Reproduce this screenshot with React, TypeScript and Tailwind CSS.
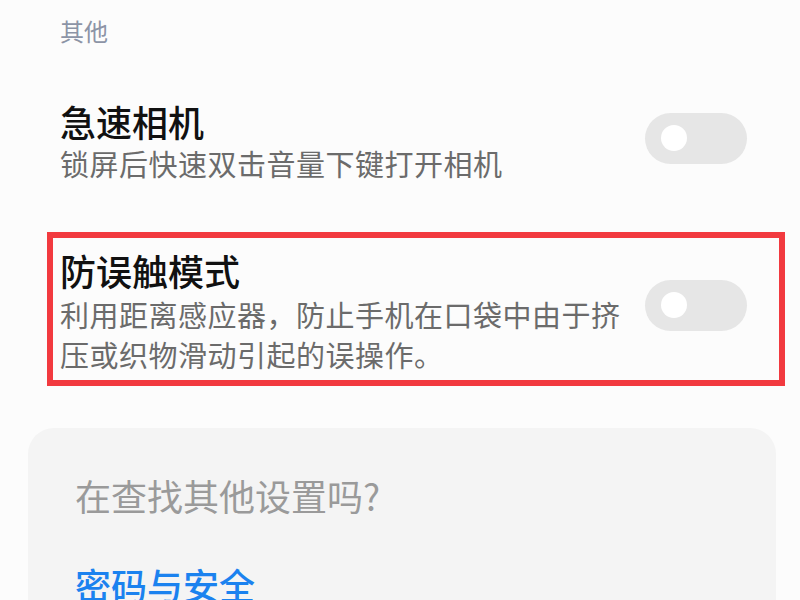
import React from 'react';

const Toggle: React.FC<{ className?: string }> = ({ className = '' }) => (
  <div className={`w-[102px] h-[51px] shrink-0 rounded-full bg-[#e6e6e6] flex items-center pl-[16px] ${className}`}>
    <div className="w-[26px] h-[26px] rounded-full bg-white" />
  </div>
);

const App: React.FC = () => {
  return (
    <div className="w-[800px] h-[600px] overflow-hidden bg-[#fcfcfc] font-['Noto_Sans_CJK_SC',sans-serif]">
      <div className="pl-[60px] pt-[15px] text-[24px] leading-[32px] text-[#8c94a6]">其他</div>

      <div className="mt-[52px] flex items-center justify-between pl-[60px] pr-[53px]">
        <div>
          <div className="text-[36px] leading-[44px] font-medium text-[#111]">急速相机</div>
          <div className="text-[29px] leading-[40px] tracking-[0.5px] text-[#6b6b6b]">锁屏后快速双击音量下键打开相机</div>
        </div>
        <Toggle className="mb-[6px]" />
      </div>

      <div className="mt-[49px] mx-[47px] w-[738px] border-[6px] border-[#f23a3f] flex items-center justify-between pl-[7px] pr-[32px] pt-[10px] pb-[6px]">
        <div className="w-[570px]">
          <div className="text-[36px] leading-[44px] font-medium text-[#111]">防误触模式</div>
          <div className="mt-[2px] text-[29px] leading-[40px] tracking-[0.5px] text-[#6b6b6b]">
            利用距离感应器，防止手机在口袋中由于挤压或织物滑动引起的误操作。
          </div>
        </div>
        <Toggle className="mb-[12px]" />
      </div>

      <div className="mt-[42px] mx-[28px] w-[748px] h-[220px] rounded-[26px] bg-[#f4f4f4] px-[47px] pt-[43px]">
        <div className="text-[36px] leading-[48px] text-[#9a9a9a]">在查找其他设置吗?</div>
        <div className="mt-[41px] text-[36px] leading-[48px] font-medium text-[#1b82ef]">密码与安全</div>
      </div>
    </div>
  );
};

export default App;
